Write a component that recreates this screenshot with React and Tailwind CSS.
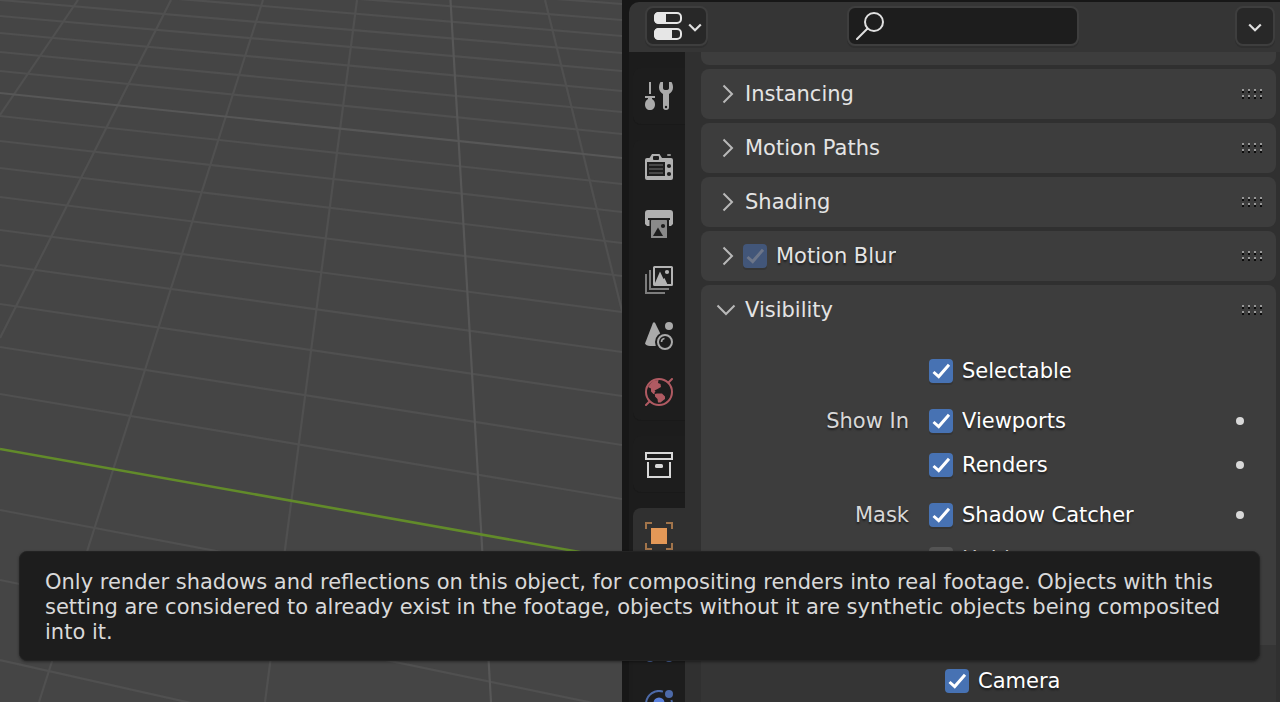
import React, { useState } from 'react';

const CROSS_LINES = [
  [-44, 4], [-30, 20], [-16, 36], [0, 53], [16, 71], [33, 91], [52, 112], [71, 134],
  [116, 184], [141, 212], [168, 243], [197, 276], [230, 312], [265, 352],
  [304, 396], [347, 445], [394, 499], [510, 628], [580, 709], [660, 800],
];

const DEPTH_LINES = [
  [78, 0, 0, 115],
  [171, 0, 0, 338],
  [263, 0, 39, 702],
  [357, 0, 265, 702],
  [545, 0, 622, 311],
];

function Viewport() {
  return (
    <main aria-label="3D viewport" className="min-w-0 overflow-hidden bg-[#454545]">
      <svg className="block h-full w-full" viewBox="0 0 622 702" preserveAspectRatio="xMinYMin slice" aria-hidden="true">
        <g stroke="#505050" strokeWidth="2.2">
          {CROSS_LINES.map(([a, b]) => <line key={a} x1="0" y1={a} x2="622" y2={b} />)}
          {DEPTH_LINES.map(([a, b, c, d]) => <line key={a} x1={a} y1={b} x2={c} y2={d} />)}
        </g>
        <g stroke="#575757" strokeWidth="2.2">
          <line x1="0" y1="93" x2="622" y2="158" />
          <line x1="450.5" y1="0" x2="491" y2="702" />
        </g>
        <line x1="0" y1="449" x2="622" y2="559.5" stroke="#628b2a" strokeWidth="2.6" />
      </svg>
    </main>
  );
}

function Icon({ children }) {
  return (
    <svg className="block size-7 shrink-0" viewBox="0 0 28 28" fill="none" aria-hidden="true">
      {children}
    </svg>
  );
}

const EditorIcon = () => (
  <Icon>
    <rect x="1" y="1" width="26" height="10" rx="4" stroke="#e6e6e6" strokeWidth="2" />
    <path d="M12 0H5Q0 0 0 5V7Q0 12 5 12H12Z" fill="#e6e6e6" />
    <rect x="1" y="17" width="26" height="10" rx="4" stroke="#e6e6e6" strokeWidth="2" />
    <path d="M18 16H5Q0 16 0 21V23Q0 28 5 28H18Z" fill="#e6e6e6" />
  </Icon>
);

const SearchIcon = () => (
  <Icon>
    <circle cx="18" cy="10" r="9" stroke="#e0e0e0" strokeWidth="2" />
    <path d="M11.5 16.5L1 27" stroke="#e0e0e0" strokeWidth="2" strokeLinecap="round" />
  </Icon>
);

const SmallChevron = () => (
  <svg className="block h-3 w-3.5" viewBox="0 0 14 12" fill="none" aria-hidden="true">
    <path d="M1.2 4.500L7 10.300L12.800 4.500" stroke="#e0e0e0" strokeWidth="2.2" />
  </svg>
);

const ToolIcon = () => (
  <Icon>
    <path d="M4 0H6V12H4Z M0 14H10V16H7V17C9 18 10 20 10 22.500C10 26 8 28 5 28C2 28 0 26 0 22.500C0 20 1 18 3 17V16H0Z" fill="#aaaaaa" />
    <path fillRule="evenodd" d="M15.500 0H18V6Q18 8 21 8Q24 8 24 6V0H26.500C27.500 1.500 28 3.500 28 5.500C28 8.500 26.500 10.500 24 12V25.300Q24 28 21 28Q18 28 18 25.300V12C15.500 10.500 14 8.500 14 5.500C14 3.500 14.500 1.500 15.500 0ZM21 23.800A1.200 1.200 0 1 0 21 26.200A1.200 1.200 0 1 0 21 23.800Z" fill="#aaaaaa" />
  </Icon>
);

const RenderIcon = () => (
  <Icon>
    <path d="M2 4H4.500L7 0H14.500L17 4H26Q28 4 28 6V24Q28 26 26 26H2Q0 26 0 24V6Q0 4 2 4Z" fill="#b0b0b0" />
    <rect x="22" y="0" width="4" height="2" rx="1" fill="#909090" />
    <rect x="8" y="2" width="6" height="4" rx="1" fill="#1d1d1d" />
    <rect x="2" y="8" width="18" height="14" fill="#1d1d1d" />
    <path d="M4 11H18M4 15H18M4 19H18" stroke="#484848" strokeWidth="2" />
    <circle cx="24" cy="12" r="2.100" fill="#1d1d1d" />
    <circle cx="24" cy="20" r="2.100" fill="#1d1d1d" />
  </Icon>
);

const OutputIcon = () => (
  <Icon>
    <path d="M0 3Q0 0 3 0H25Q28 0 28 3V14L26 16H24V10H25V8H3V10H4.500V16H2L0 14Z" fill="#b0b0b0" />
    <rect x="6" y="10" width="16" height="18" rx="0.500" fill="#8a8a8a" />
    <path d="M8 26L13 17.500L18 26Z" fill="#1d1d1d" />
    <circle cx="18" cy="16" r="2.100" fill="#1d1d1d" />
  </Icon>
);

const ViewLayerIcon = () => (
  <Icon>
    <path d="M1 8V27H20M5 4V23H24" stroke="#7d7d7d" strokeWidth="2" />
    <rect x="9" y="1" width="18" height="18" rx="0.500" stroke="#b4b4b4" strokeWidth="2" />
    <path d="M10 18.500V17L15 5.500L18.500 13L19.500 12L22.500 18.500Z" fill="#b4b4b4" />
    <circle cx="22" cy="6" r="2.100" fill="#b4b4b4" />
  </Icon>
);

const SceneIcon = () => (
  <Icon>
    <path d="M8 0.800Q9 -0.500 10 0.800L15.500 12L12 24H5Q1 23.500 0 21.500Z" fill="#aaaaaa" />
    <circle cx="20" cy="20" r="10" fill="#1d1d1d" />
    <circle cx="24" cy="4" r="4" fill="#aaaaaa" />
    <circle cx="20" cy="20" r="7" stroke="#aaaaaa" strokeWidth="2" />
    <path d="M16.500 20Q16.500 16.800 19.500 16.500" stroke="#aaaaaa" strokeWidth="1.600" />
  </Icon>
);

const WorldIcon = () => (
  <Icon>
    <g stroke="#b05a62" strokeWidth="2" strokeLinecap="round">
      <circle cx="14" cy="14" r="13" />
      <path d="M27 1L23.500 4.500M1 27L4.500 23.500" />
    </g>
    <path d="M9 2.500L6 5L3 9L6 10.500V13.500L8.500 16L10.500 13.500L9.500 12.500L12.500 11L16 9L15.500 6L13 5L13.500 2Z" fill="#b05a62" />
    <path d="M8 14L10 16L12 15.500H17L20 18.500V21L15.500 24.500H13L12.500 21L10 18.500V16.500L8 15.500Z" fill="#b05a62" />
  </Icon>
);

const CollectionIcon = () => (
  <Icon>
    <rect x="1" y="3" width="26" height="6" stroke="#d8d8d8" strokeWidth="2" />
    <path d="M3 12V27H25V12" stroke="#d8d8d8" strokeWidth="2" />
    <rect x="10" y="14" width="8" height="4" rx="1.500" fill="#d8d8d8" />
  </Icon>
);

const ObjectIcon = () => (
  <Icon>
    <path d="M1 7V1H7M21 1H27V7M27 21V27H21M7 27H1V21" stroke="#a2744a" strokeWidth="2" />
    <rect x="6" y="6" width="16" height="16" fill="#e39857" />
  </Icon>
);

const ModifierIcon = () => (
  <Icon>
    <path d="M25 3L13 15" stroke="#4d6aa8" strokeWidth="5" />
    <circle cx="9" cy="19" r="6" stroke="#4d6aa8" strokeWidth="4" />
  </Icon>
);

const ParticlesIcon = () => (
  <Icon>
    <g fill="#4d6aa8">
      <circle cx="14" cy="12" r="4" />
      <circle cx="5" cy="24" r="4" />
      <circle cx="24" cy="24" r="4" />
    </g>
  </Icon>
);

const PhysicsIcon = () => (
  <Icon>
    <path d="M18 1.600A13 13 0 1 0 26.400 10" stroke="#4d6aa8" strokeWidth="2" />
    <circle cx="24" cy="4" r="4" fill="#4d6aa8" />
    <circle cx="14" cy="13" r="5.500" fill="#5a80da" />
  </Icon>
);

const TAB_GROUPS = [
  [['Tool', ToolIcon]],
  [
    ['Render', RenderIcon],
    ['Output', OutputIcon],
    ['View Layer', ViewLayerIcon],
    ['Scene', SceneIcon],
    ['World', WorldIcon],
  ],
  [['Collection', CollectionIcon]],
  [
    ['Object', ObjectIcon],
    ['Modifiers', ModifierIcon],
    ['Particles', ParticlesIcon],
    ['Physics', PhysicsIcon],
  ],
];

function TabRail() {
  return (
    <nav aria-label="Properties" className="flex w-14 shrink-0 flex-col gap-4 overflow-hidden bg-[#1c1c1c] pt-4 pl-1">
      {TAB_GROUPS.map((group) => (
        <div key={group[0][0]} className="flex shrink-0 flex-col rounded-l-lg bg-[#1d1d1d] shadow-[0_1px_0_#191919]">
          {group.map(([name, Glyph]) => (
            <button
              key={name}
              type="button"
              aria-label={name}
              aria-current={name === 'Object' ? 'page' : undefined}
              className="flex h-14 items-center justify-center rounded-l-lg aria-[current=page]:bg-[#303030]"
            >
              <Glyph />
            </button>
          ))}
        </div>
      ))}
    </nav>
  );
}

function Header() {
  return (
    <header className="flex h-[50px] shrink-0 items-start rounded-tl-[10px] bg-[#353535] pt-1 pr-[5px] pl-4">
      <button
        type="button"
        aria-label="Editor type"
        aria-haspopup="menu"
        className="flex h-10 w-[63px] items-center gap-1.5 rounded-lg border-2 border-[#3e3e3e] bg-[#282828] pl-[7px] shadow-[0_2px_0_#2f2f2f]"
      >
        <EditorIcon />
        <SmallChevron />
      </button>
      <div className="flex min-w-0 flex-1 justify-center pr-[18px]">
        <label className="flex h-10 w-[232px] items-center rounded-lg border-2 border-[#3e3e3e] bg-[#1d1d1d] pl-[7px] shadow-[0_2px_0_#2f2f2f]">
          <SearchIcon />
          <input type="text" aria-label="Search" className="min-w-0 flex-1 bg-transparent px-2 text-[21px] text-white outline-none" />
        </label>
      </div>
      <button
        type="button"
        aria-label="Options"
        aria-haspopup="menu"
        className="flex size-10 items-center justify-center rounded-lg border-2 border-[#3e3e3e] bg-[#282828] shadow-[0_2px_0_#2f2f2f]"
      >
        <SmallChevron />
      </button>
    </header>
  );
}

function DragHandle() {
  return (
    <svg className="mr-3.5 block h-2.5 w-5 shrink-0" viewBox="0 0 20 10" shapeRendering="crispEdges" aria-hidden="true">
      {[0, 6].map((y) => [0, 6, 12, 18].map((x) => (
        <g key={`${x}-${y}`}>
          <rect x={x} y={y} width="2" height="2" fill="#989898" />
          <rect x={x} y={y + 2} width="2" height="2" fill="#0c0c0c" />
        </g>
      )))}
    </svg>
  );
}

function Disclosure({ open }) {
  return (
    <svg className="block size-7 shrink-0" viewBox="0 0 28 28" fill="none" aria-hidden="true">
      <path d={open ? 'M4.500 9.500L13 18L21.500 9.500' : 'M10.500 5.500L19 14L10.500 22.500'} stroke="#b8b8b8" strokeWidth="2" />
    </svg>
  );
}

function Checkbox({ defaultChecked, dim, children }) {
  const [checked, setChecked] = useState(defaultChecked);
  return (
    <label className="flex min-w-0 items-center gap-[9px]">
      <span className="grid size-6 shrink-0">
        <input
          type="checkbox"
          checked={checked}
          onChange={(e) => setChecked(e.target.checked)}
          className={
            'col-start-1 row-start-1 m-0 size-6 appearance-none rounded bg-[#545454] shadow-[0_2px_0_#353535] ' +
            (dim ? 'checked:bg-[#425679]' : 'checked:bg-[#4772b3]')
          }
        />
        {checked && (
          <svg className="pointer-events-none col-start-1 row-start-1 size-6" viewBox="0 0 24 24" fill="none" aria-hidden="true">
            <path d="M4.500 13L9.700 17.600L20 5.700" stroke={dim ? '#6d7689' : '#ffffff'} strokeWidth="3" />
          </svg>
        )}
      </span>
      <span className="truncate leading-8">{children}</span>
    </label>
  );
}

function Panel({ title, toggle, open, children }) {
  return (
    <section className="shrink-0 rounded-lg bg-[#3d3d3d] text-[#e4e4e4]">
      <div className="flex h-[50px] items-center pl-3">
        {toggle ? (
          <>
            <button type="button" aria-expanded={false} aria-label={`Expand ${title}`}>
              <Disclosure />
            </button>
            <div className="ml-0.5 flex-1">
              <Checkbox defaultChecked dim>{title}</Checkbox>
            </div>
          </>
        ) : (
          <button type="button" aria-expanded={!!open} className="flex flex-1 items-center gap-1 text-left">
            <Disclosure open={open} />
            <span>{title}</span>
          </button>
        )}
        <DragHandle />
      </div>
      {children}
    </section>
  );
}

function PropertyRow({ heading, label, checked = true, keyable, muted }) {
  return (
    <div className="flex h-10 items-center gap-5">
      <span className="w-48 shrink-0 text-right text-[#d8d8d8]">{heading}</span>
      <div className={muted ? 'min-w-0 flex-1 text-[#d0d0d0]' : 'min-w-0 flex-1 text-white'}>
        <Checkbox defaultChecked={checked}>{label}</Checkbox>
      </div>
      {keyable && (
        <button type="button" aria-label={`Animate ${label}`} className="flex size-10 items-center justify-center">
          <span className="size-2 rounded-full bg-[#d8d8d8]" />
        </button>
      )}
    </div>
  );
}

function PropertyPanels() {
  return (
    <div className="flex min-w-0 flex-1 flex-col gap-1 overflow-hidden bg-[#303030] pr-1 pl-4 text-[21px] leading-8 [text-shadow:0_2px_2px_rgba(0,0,0,0.5)]">
      <div className="h-[13px] shrink-0 rounded-b-lg bg-[#3d3d3d]" />
      <Panel title="Instancing" />
      <Panel title="Motion Paths" />
      <Panel title="Shading" />
      <Panel title="Motion Blur" toggle />
      <Panel title="Visibility" open>
        <div className="flex flex-col gap-2.5 px-4 pt-4 pb-[66px]">
          <PropertyRow label="Selectable" />
          <div className="flex flex-col gap-1">
            <PropertyRow heading="Show In" label="Viewports" keyable />
            <PropertyRow label="Renders" keyable />
          </div>
          <div className="flex flex-col gap-1">
            <PropertyRow heading="Mask" label="Shadow Catcher" keyable />
            <PropertyRow label="Holdout" checked={false} muted />
          </div>
        </div>
        <div className="rounded-b-lg bg-[#353535] pt-4 pr-4 pb-8 pl-8">
          <PropertyRow label="Camera" />
        </div>
      </Panel>
    </div>
  );
}

export default function App() {
  return (
    <div className="relative grid h-screen grid-cols-[minmax(0,622fr)_minmax(0,658fr)] grid-rows-[minmax(0,1fr)] overflow-hidden bg-[#171717] font-['DejaVu_Sans',sans-serif]">
      <Viewport />
      <aside className="flex min-w-0 flex-col pt-0.5 pl-[7px]">
        <Header />
        <div className="flex min-h-0 flex-1">
          <TabRail />
          <PropertyPanels />
        </div>
      </aside>
      <div
        role="tooltip"
        className="absolute top-[551px] right-5 left-[19px] rounded-lg border border-[#232323] bg-[#1d1d1d] px-[25px] pt-[18px] pb-[15px] text-[21px] leading-[25px] text-[#d9d9d9] shadow-[0_1px_3px_rgba(0,0,0,0.4)]"
      >
        Only render shadows and reflections on this object, for compositing renders into real footage. Objects with this
        setting are considered to already exist in the footage, objects without it are synthetic objects being composited
        into it.
      </div>
    </div>
  );
}
